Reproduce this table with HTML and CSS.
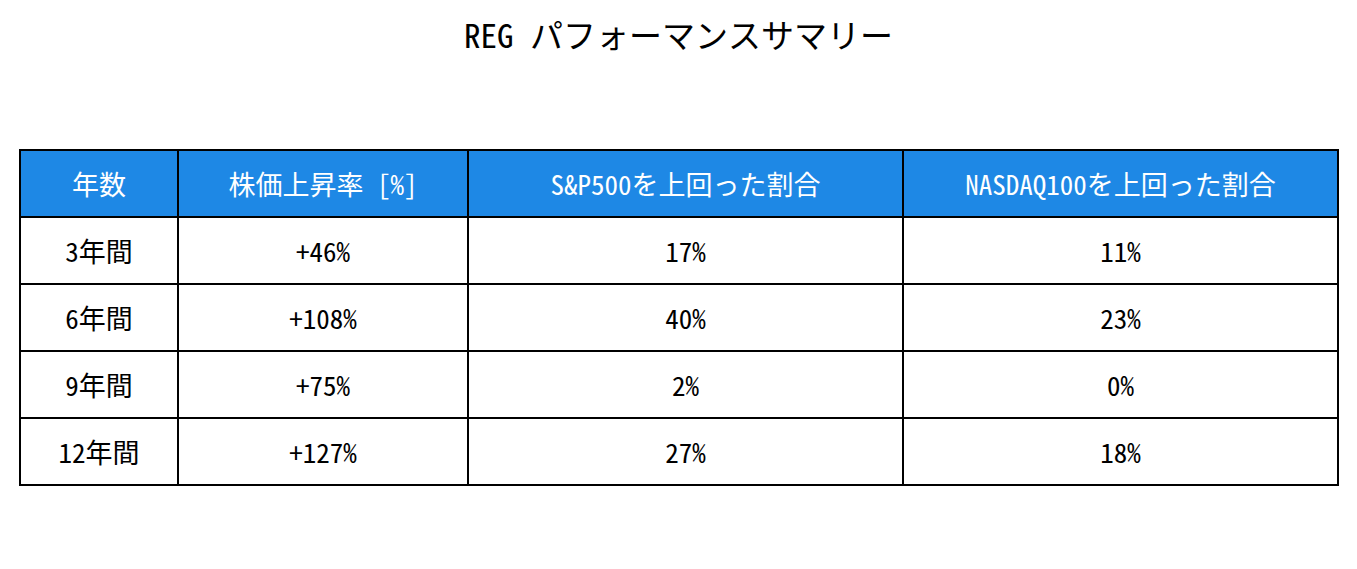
FILE: index.html
```html
<!DOCTYPE html>
<html lang="ja">
<head>
<meta charset="utf-8">
<link rel="stylesheet" href="styles.css">
</head>
<body>
<div class="page">
  <h1 class="title">REG パフォーマンスサマリー</h1>
  <table class="summary">
    <colgroup>
      <col class="c1"><col class="c2"><col class="c3"><col class="c4">
    </colgroup>
    <thead>
      <tr><th>年数</th><th>株価上昇率 [%]</th><th>S&amp;P500を上回った割合</th><th>NASDAQ100を上回った割合</th></tr>
    </thead>
    <tbody>
      <tr><td>3年間</td><td>+46%</td><td>17%</td><td>11%</td></tr>
      <tr><td>6年間</td><td>+108%</td><td>40%</td><td>23%</td></tr>
      <tr><td>9年間</td><td>+75%</td><td>2%</td><td>0%</td></tr>
      <tr><td>12年間</td><td>+127%</td><td>27%</td><td>18%</td></tr>
    </tbody>
  </table>
</div>
</body>
</html>
```
FILE: styles.css
```css
html, body {
  margin: 0;
  padding: 0;
  background: #ffffff;
}
body {
  font-family: "Noto Sans Mono CJK JP", "Noto Sans CJK JP", sans-serif;
  color: #000;
}
.page {
  width: 1357px;
  height: 569px;
  padding-top: 12px;
  box-sizing: border-box;
}
.title {
  margin: 0;
  text-align: center;
  font-weight: normal;
  font-size: 33px;
  line-height: 44px;
}
.summary {
  margin: 93px 0 0 19px;
  border-collapse: collapse;
  table-layout: fixed;
  width: 1318px;
  border: 2px solid #000;
}
.c1 { width: 158px; }
.c2 { width: 290px; }
.c3 { width: 435px; }
.c4 { width: 435px; }
.summary th, .summary td {
  border: 2px solid #000;
  text-align: center;
  height: 65px;
  padding: 0;
  font-size: 27px;
  font-weight: normal;
}
.summary th {
  background: #1e88e5;
  color: #fff;
}
```
